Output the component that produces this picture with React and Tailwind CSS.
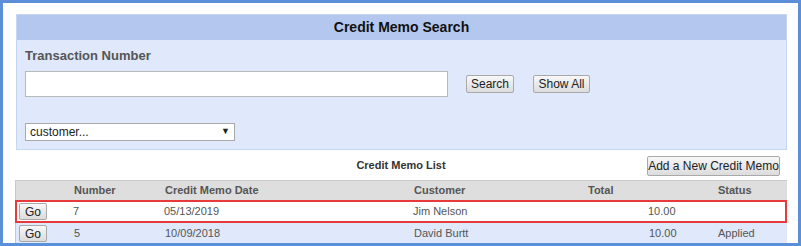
import React from "react";

const rows = [
  { num: "7", date: "05/13/2019", customer: "Jim Nelson", total: "10.00", status: "", selected: true },
  { num: "5", date: "10/09/2018", customer: "David Burtt", total: "10.00", status: "Applied" },
];

const Btn = ({ children, className = "" }) => (
  <button
    className={`border border-[#a9a9a9] bg-gradient-to-b from-[#f8f8f8] to-[#dcdcdc] rounded-[2px] text-[#222] leading-none whitespace-nowrap ${className}`}
  >
    {children}
  </button>
);

const App = () => {
  return (
    <div
      className="w-[801px] h-[246px] border-[3px] border-[#5b8fd7] bg-white overflow-hidden text-[#333]"
      style={{ fontFamily: '"Liberation Sans", Arial, sans-serif' }}
    >
      {/* Search panel */}
      <div className="ml-[13px] mt-[11px] w-[771px] border border-[#c5d6f1] bg-[#dfe9fb]">
        <div className="h-[25px] bg-[#b4c8ef] flex items-center justify-center text-[14px] font-bold text-[#111]">
          Credit Memo Search
        </div>
        <div className="px-[8px] pt-[9px] pb-[8px]">
          <div className="text-[13px] font-bold text-[#555] h-[14px] leading-[14px]">Transaction Number</div>
          <div className="flex items-center mt-[8px]">
            <input
              type="text"
              className="w-[423px] h-[26px] bg-white border border-[#b9b9b9] outline-none"
            />
            <Btn className="ml-[18px] h-[18px] w-[48px] text-[12px]">Search</Btn>
            <Btn className="ml-[19px] h-[18px] w-[57px] text-[12px]">Show All</Btn>
          </div>
          <div className="mt-[26px] w-[210px] h-[18px] bg-white border border-[#a9a9a9] flex items-center justify-between px-[4px] text-[12px] text-[#222]">
            <span>customer...</span>
            <span className="text-[9px]">▼</span>
          </div>
        </div>
      </div>

      {/* List header */}
      <div className="ml-[12px] w-[772px] h-[30px] flex items-center">
        <div className="flex-1"></div>
        <div className="text-[11px] font-bold text-[#333]">Credit Memo List</div>
        <div className="flex-1 flex justify-end">
          <Btn className="mr-[7px] mt-[2px] h-[20px] w-[133px] text-[12px]">Add a New Credit Memo</Btn>
        </div>
      </div>

      {/* Table */}
      <div className="ml-[12px] w-[772px] text-[11px]">
        <div className="grid grid-cols-[58px_91px_249px_174px_130px_1fr] h-[20px] items-center bg-[#dedede] border-t border-l border-[#c9c9c9] font-bold text-[#555]">
          <div></div>
          <div>Number</div>
          <div>Credit Memo Date</div>
          <div>Customer</div>
          <div>Total</div>
          <div>Status</div>
        </div>
        {rows.map((r) =>
          <div
            key={r.num}
            className={`grid grid-cols-[58px_91px_249px_174px_130px_1fr] items-center text-[#555] ${
              r.selected
                ? "h-[23px] bg-white shadow-[inset_0_0_0_2px_#e8393b]"
                : "h-[21px] bg-[#dfe9fb] border-l border-[#c9c9c9]"
            }`}
          >
            <div className={r.selected ? "pl-[4px]" : "pl-[3px]"}>
              <Btn className="h-[17px] w-[28px] text-[12px]">Go</Btn>
            </div>
            <div>{r.num}</div>
            <div>{r.date}</div>
            <div>{r.customer}</div>
            <div className="pl-[61px]">{r.total}</div>
            <div>{r.status}</div>
          </div>
        )}
      </div>
    </div>
  );
};

export default App;
